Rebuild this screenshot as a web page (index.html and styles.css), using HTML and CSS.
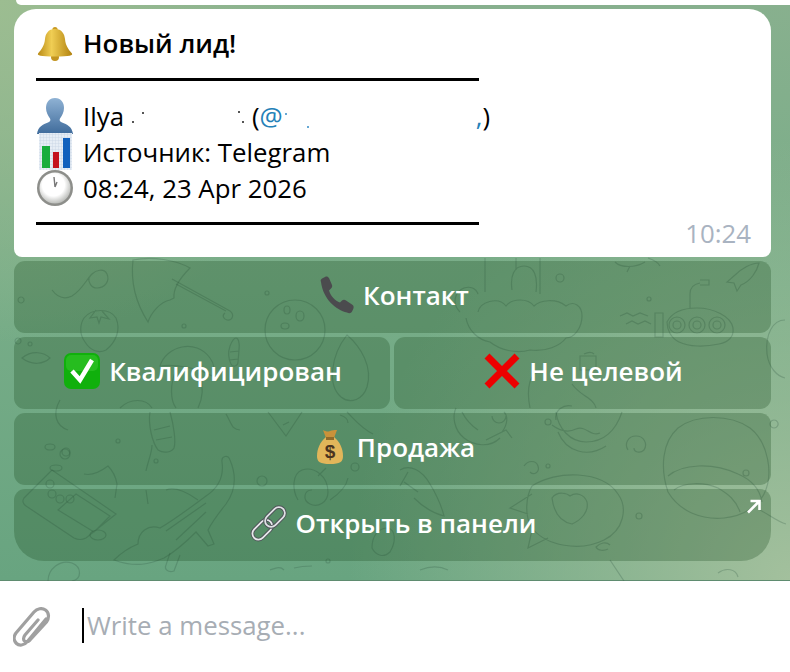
FILE: index.html
```html
<!DOCTYPE html>
<html lang="en">
  <head>
    <meta charset="UTF-8" />
    <title>Новый лид</title>
    <link rel="stylesheet" href="styles.css">
  </head>
  <body>
    <main class="chat">
      <svg class="doodles" width="790" height="581" viewBox="0 0 790 581" fill="none">
        <!-- umbrella -->
        <path d="M133 260c-3 26 6 48 15 62 3-9 12-20 22-22l4-2c-1-10 6-20 16-30-14-8-38-12-57-8z" />
        <path d="M172 279l58 32c5 4 2 10-3 9-4-1-5-5-2-7M176 284l50 27" />
        <path d="M52 290c6 8 12 10 20 6 10-6 14-16 20-22 4-4 12-6 15 0 3 7-2 14-10 14-6 0-9-6-8-11M21 297a3 3 0 1 0 .1 0" />
        <!-- tomato -->
        <path d="M84 318c8-10 26-10 32 0 5 12 0 24-10 32-8 4-16 0-21-8-6-8-5-18-1-24zM96 310l-6 8 7-1 2 6 2-6 8 2-7-8" />
        <!-- ball -->
        <circle cx="295" cy="330" r="30" />
        <ellipse cx="287" cy="310" rx="3" ry="4" /><ellipse cx="300" cy="316" rx="4" ry="5" /><ellipse cx="285" cy="326" rx="4" ry="3" />
        <circle cx="267" cy="293" r="2" /><circle cx="184" cy="326" r="2" />
        <!-- mushroom, rattle and leaves in the second row -->
        <path d="M160 366c6-20 36-28 50-8 6 8 4 14 2 18-14-8-36-12-52-10zM176 370c-6 14-6 30 0 38M200 374c4 14 2 26-2 34" />
        <path d="M230 346c2-5 4-8 6-8s4 4 3 12l-1 12c0 4-5 6-7 2-3-6-3-12-1-18zM230 352l9-1M230 360l8-1" />
        <path d="M347 335c14 12 26 32 20 52-4 12-16 18-26 10-14-12-10-42 6-62z" />
        <path d="M22 358c10-8 22-6 28 0-6 6-18 8-28 0zM18 338a3 3 0 1 0 .1 0M30 342a2 2 0 1 0 .1 0" />
        <path d="M120 408c10-10 26-10 32 0M60 400c-8 14-4 26 8 30" />
        <!-- cloud and castle -->
        <path d="M485 258v34M540 258v36M516 258v12M512 290c-2-14 2-24 12-24s14 10 12 26M460 312c-8-8-6-20 4-24 6-2 12 0 14 6M478 312c2-10 20-16 28-6 6-8 22-8 28 0 6-6 22-8 32 0 8-6 16 0 16 10 0 12-8 22-16 22-6 8-20 14-36 12-14 4-30 0-40-8-12-2-22-12-24-24" />
        <circle cx="560" cy="278" r="4" /><circle cx="649" cy="299" r="2" />
        <!-- submarine -->
        <path d="M667 322c4-8 14-14 30-14 16 0 34 8 36 20 1 8-4 14-14 16-14 3-30 3-40-2-8-4-12-12-12-20zM690 308v-14c0-6 4-10 10-11M700 280h9v5h-9M655 313h8v24h-8z" />
        <circle cx="677" cy="325" r="8" /><circle cx="697" cy="325" r="8" /><circle cx="717" cy="325" r="8" />
        <circle cx="677" cy="325" r="4" /><circle cx="697" cy="325" r="4" /><circle cx="717" cy="325" r="4" />
        <path d="M620 316l7-3 6 3 7-3 8 3M626 324l6-3 6 3 7-3 6 3" />
        <!-- fish top right -->
        <path d="M735 275c6-6 16-12 24-12 -2 8-8 18-18 22l-4 6-3-8-7-1z" />
        <path d="M615 262c6 6 20 6 30 0M630 266l-3 6M648 258c6 2 10 4 12 8" />
        <path d="M785 320c-12 0-20 14-18 34 2 14 10 22 18 24" />
        <!-- row 2 middle and lower middle -->
        <path d="M540 372c-10 0-14 16-10 36M572 384c8 12 22 14 24 24" />
        <path d="M456 408c-4 8-2 22 8 30 10 8 26 10 36 0" />
        <path d="M556 420c-2-10 8-16 16-14M558 432c8 20 30 26 48 14" />
        <path d="M580 356h16v14h-16zM584 354c4-2 8-2 10 0" />
        <!-- pear and cheese row 3 -->
        <path d="M150 412c-2 12 2 30 8 38 6 4 14 2 16-2 2-6 0-22-4-36M154 430l16-4M156 440l16-3" />
        <path d="M268 412l18 24 16-24M240 430c-8 0-8-6-14-16M283 425l6-3" />
        <path d="M347 412c8 8 14 16 26 22M340 415c6 2 8 4 8 8" />
        <circle cx="118" cy="441" r="2" /><circle cx="355" cy="467" r="4" /><circle cx="66" cy="452" r="4" /><circle cx="262" cy="481" r="5" />
        <!-- rocket -->
        <path d="M462 412c4 8 10 14 16 18M492 416a7 7 0 1 0 14 0M502 432c6-8 6-16 2-20M486 440l20-10 6 8" />
        <!-- planet -->
        <path d="M556 412c2 16 14 30 30 30 18 0 30-12 36-30M552 425c8 6 16 8 24 4 10-4 14 8 24 4" />
        <path d="M628 450c-4-6 0-14 8-14 8 0 12 8 8 14-4 4-10 2-10-2" />
        <circle cx="548" cy="422" r="3" /><circle cx="548" cy="466" r="2" />
        <path d="M524 466c4-6 12-6 14 0 2 6-4 10-8 6" />
        <!-- big ball on the right -->
        <path d="M668 492c-8-24-6-50 10-64 18-14 52-14 72 0 18 14 24 46 14 66-6 12-20 22-40 24-22 2-44-6-56-26zM668 476c14-12 44-14 70-2 14 6 22 16 24 28M674 490c10-8 30-8 44-2 10 6 18 12 22 24" />
        <circle cx="746" cy="473" r="3" />
        <!-- coins and wallet -->
        <path d="M24 498l24-24 4-4 64 44-30 24c-4 2-8 2-12 0l-48-32c-3-2-4-5-2-8zM58 510l18-16 34 22-16 16zM84 474c8 2 16-2 24-8 6 6 8 12 9 18l-2 14" />
        <circle cx="50" cy="484" r="4" /><circle cx="52" cy="494" r="4" /><circle cx="60" cy="499" r="4" /><circle cx="70" cy="499" r="4" />
        <ellipse cx="50" cy="447" rx="5" ry="3" /><ellipse cx="56" cy="468" rx="6" ry="3" /><circle cx="65" cy="454" r="5" />
        <ellipse cx="98" cy="535" rx="8" ry="5" />
        <path d="M152 445c0 8-4 16-6 26M146 490l2 14" />
        <!-- crocodile -->
        <path d="M114 560c6-6 14-12 24-16 0-12 10-20 22-16 14-8 30-20 46-32 12-8 18-20 16-34-1-6 6-8 8-2 6 14 6 30-4 44-8 10-14 18-18 26l6 14-6 2-12-14c-8 8-18 18-32 26-14 6-28 10-50 2zM166 531l40-28M176 540l30-28M198 500c-8-6-22-14-32-10" />
        <path d="M170 553l-4 12c-2 4 2 8 8 6l6-16" />
        <!-- snail -->
        <path d="M298 500c-6-10-6-26 4-30 12-4 26 6 26 22 0 10-10 16-18 12-8-4-6-14 2-14M330 500c6-4 16-12 18-22M318 476l8-8" />
        <circle cx="156" cy="461" r="2" />
        <!-- strawberry and carrot -->
        <path d="M400 470c10-6 22 0 30 14 6 10 12 24 14 32-8-2-20-8-30-18M404 482l14 10M408 472l-8 14" />
        <path d="M372 548c0-12 6-20 16-20 8 2 8 14 2 24-6 6-14 4-18-4z" />
        <!-- fish with a heart -->
        <path d="M532 486c24-16 70-16 86 8 10 14 6 36-14 46-24 12-58 6-72-12-8-12-6-32 0-42zM532 494l-22 14 18 6M532 530l-4 18 20-10M610 545c-4-4-10-2-14 2 2 4 8 4 12 2" />
        <path d="M552 498c6-8 16-4 18-2 6-4 14-2 17 6 2 10-6 18-15 22-10-2-18-10-20-26z" />
        <circle cx="639" cy="516" r="3" />
        <!-- bottom strip -->
        <path d="M48 581c0-12 12-22 24-18 10 4 10 16 0 18M294 568c8-2 12-2 18-2M420 570c10-4 20-4 28 0M610 560l14 21M718 573c8-6 18-4 20 4M270 570c6-2 10-4 14 0" />
        <circle cx="328" cy="561" r="2" />
        <path d="M760 510c8 4 18 12 26 14M774 420a4 4 0 1 0 .1 0" />
      </svg>

      <div class="prev-bubble"></div>

      <article class="bubble">
        <p class="row title">
          <svg class="emoji" viewBox="0 0 36 36">
            <defs>
              <linearGradient id="gold" x1="0" y1="0" x2="1" y2="0">
                <stop offset="0" stop-color="#b98a16" /><stop offset=".4" stop-color="#f0ce54" /><stop offset="1" stop-color="#b2820f" />
              </linearGradient>
            </defs>
            <circle cx="18" cy="31" r="4" fill="#c29420" />
            <circle cx="18" cy="3.500" r="2.600" fill="#c99a22" />
            <path d="M18 3c7 0 9.500 5 10 10 .5 6 3 10 7 14.500 1 2-2 3-17 3s-18-1-17-3C5 23 7.500 19 8 13c.5-5 3-10 10-10z" fill="url(#gold)" />
          </svg>
          <strong>Новый лид!</strong>
        </p>
        <hr class="rule rule-top" />

        <p class="row">
          <svg class="emoji" viewBox="0 0 36 36">
            <defs>
              <linearGradient id="blue" x1="0" y1="0" x2="0" y2="1">
                <stop offset="0" stop-color="#8fb2d4" /><stop offset="1" stop-color="#3f6b9b" />
              </linearGradient>
            </defs>
            <path d="M18 0c6 0 9 4.500 9 10 0 4-2 8-4 10.500-1 2 0 3 2 4 5 2 10 4 11 11.500H0c1-7.500 6-9.500 11-11.500 2-1 3-2 2-4C11 18 9 14 9 10c0-5.500 3-10 9-10z" fill="url(#blue)" />
          </svg>
          <span>Ilya</span>
          <span class="smudge smudge-name">
            <i class="speck dot1"></i><i class="speck dot2"></i><i class="speck dot3"></i><i class="speck dot4"></i>
          </span>
          <span class="open">(<b class="link">@</b></span>
          <span class="smudge smudge-nick">
            <i class="speck speck-blue dot5"></i><i class="speck speck-blue dot6"></i>
          </span>
          <span><b class="link">,</b>)</span>
        </p>
        <p class="row">
          <svg class="emoji" viewBox="0 0 36 36">
            <defs>
              <pattern id="grid" width="3" height="3" patternUnits="userSpaceOnUse">
                <rect width="3" height="3" fill="#e6edf5" /><path d="M0 0h3M0 0v3" stroke="#c2d0e2" stroke-width=".7" />
              </pattern>
            </defs>
            <rect x="2" y="-1" width="33" height="37" fill="url(#grid)" />
            <rect x="5" y="12" width="8" height="22" fill="#18ad3c" />
            <rect x="16" y="18" width="6" height="16" fill="#c4121e" />
            <rect x="26" y="4" width="7" height="30" fill="#1160bd" />
          </svg>
          <span>Источник: Telegram</span>
        </p>
        <p class="row">
          <svg class="emoji" viewBox="0 0 36 36">
            <defs>
              <radialGradient id="face" cx=".45" cy=".4" r=".65">
                <stop offset=".55" stop-color="#fff" /><stop offset="1" stop-color="#aeb0ac" />
              </radialGradient>
            </defs>
            <circle cx="18" cy="18" r="18" fill="#8d8e8a" />
            <circle cx="18" cy="18" r="15.500" fill="url(#face)" />
            <path d="M18 17l-1-10M18 17l2-5" stroke="#777" stroke-width="1.400" fill="none" />
          </svg>
          <span>08:24, 23 Apr 2026</span>
        </p>
        <hr class="rule rule-bottom" />
        <time class="time">10:24</time>
      </article>

      <nav class="keyboard">
        <button class="key wide">
          <svg class="emoji" viewBox="0 0 36 36">
            <path d="M3 5c-1-2 0-3 2-4l2-1c2-1 3 0 4 1l3 7c.5 1.500 0 2.500-1 3.500l-2 2c2 6 6 10 11 12l2-2c1-1 3-1 4 0l6 4c2 1 2 3 1 5l-1 2c-1 2-3 2-5 1C18 33 5 22 3 5z" fill="#4b4b4e" />
          </svg>
          <span>Контакт</span>
        </button>
        <button class="key">
          <svg class="emoji" viewBox="0 0 36 36">
            <rect width="36" height="36" rx="7" fill="#10b00c" />
            <rect x="2" y="2" width="32" height="16" rx="5" fill="#3cc932" opacity=".5" />
            <path d="M8 18l8 9L28 7" fill="none" stroke="#fff" stroke-width="4.500" />
          </svg>
          <span>Квалифицирован</span>
        </button>
        <button class="key">
          <svg class="emoji" viewBox="0 0 36 36">
            <path d="M3 3L33 33M33 3L3 33" stroke="#ed0000" stroke-width="7" fill="none" />
          </svg>
          <span>Не целевой</span>
        </button>
        <button class="key wide">
          <svg class="emoji" viewBox="0 0 36 36">
            <path d="M11 1c3 1.500 5 2 7 1s4-1 7-1l-3 8h-8z" fill="#c9923a" />
            <path d="M14 8h8c6 5 9 12 9 19 0 6-3 8-13 8S5 33 5 27c0-7 3-14 9-19z" fill="#e2b65a" />
            <path d="M14 8h8v3h-8z" fill="#8f6a2a" />
            <text class="dollar" x="18" y="29" text-anchor="middle">$</text>
          </svg>
          <span>Продажа</span>
        </button>
        <button class="key wide last">
          <svg class="emoji" viewBox="0 0 36 36">
            <g fill="none" transform="rotate(-45 18 18)">
              <rect x="-3" y="12" width="23" height="12" rx="6" stroke="#4e5258" stroke-width="3.600" />
              <rect x="-3" y="12" width="23" height="12" rx="6" stroke="#e6e8ea" stroke-width="1.800" />
              <rect x="15" y="12" width="23" height="12" rx="6" stroke="#4e5258" stroke-width="3.600" />
              <rect x="15" y="12" width="23" height="12" rx="6" stroke="#dfe2e4" stroke-width="1.800" />
            </g>
          </svg>
          <span>Открыть в панели</span>
          <svg class="corner" width="15" height="15" viewBox="0 0 15 15">
            <path d="M2 13.500L13 2.500M4.500 2h9v9" fill="none" stroke="#fff" stroke-width="2.600" />
          </svg>
        </button>
      </nav>
    </main>

    <footer class="composer">
      <svg class="clip" width="38" height="44" viewBox="0 0 38 44" fill="none">
        <path d="M33 12L14 35c-3 3.500-8 4-10.500 1.500S0 30 3 26L21 5c3-3.500 8-4.500 11.500-2s4 8 1 12L17 33c-2 2-4 2-5.500 1s-1-4 .5-6l13-15" stroke="#a0a0a0" stroke-width="3.200" stroke-linecap="round" />
      </svg>
      <div class="input">
        <span class="caret"></span>
        <span class="placeholder">Write a message...</span>
      </div>
    </footer>
  </body>
</html>
```

FILE: styles.css
```css
* {
  box-sizing: border-box;
  margin: 0;
  padding: 0;
}

body {
  width: 790px;
  height: 672px;
  overflow: hidden;
  background: #fff;
  font-family: "Open Sans", "Noto Sans", sans-serif;
  font-size: 25.8px;
  color: #000;
}

.chat {
  position: relative;
  height: 581px;
  padding: 0 19px 0 14px;
  background:
    radial-gradient(circle at 100% 100%, #a3c09d 0, rgba(163, 192, 157, 0) 45%),
    radial-gradient(circle at 0 0, #9cbd91 0, rgba(156, 189, 145, 0) 35%),
    linear-gradient(180deg, #88b08e 0, #78ad88 50%, #68a480 100%);
  border-bottom: 1px solid #5f8c70;
}

.doodles {
  position: absolute;
  top: 0;
  left: 0;
  stroke: rgba(45, 85, 65, 0.26);
  stroke-width: 1.2;
}

.prev-bubble {
  position: relative;
  height: 5px;
  margin: 0 -19px 4px 2px;
  background: #fff;
  border-radius: 0 0 0 8px;
}

.bubble {
  position: relative;
  display: flex;
  flex-direction: column;
  height: 248px;
  padding: 17px 20px 0 22px;
  background: #fff;
  border-radius: 22px 22px 8px 8px;
}

.row {
  display: flex;
  align-items: center;
  height: 36px;
  line-height: 36px;
  white-space: pre;
}

.row > span {
  margin-top: -1px;
}

.row > strong {
  margin-top: -2px;
}

.emoji {
  flex: none;
  width: 36px;
  height: 36px;
  overflow: visible;
}

.row .emoji {
  margin: 0 10px 0 1px;
}

.title strong {
  font-size: 26px;
  font-weight: 600;
}

.rule {
  width: 443px;
  height: 3px;
  background: #000;
  border: 0;
}

.rule-top {
  margin: 16px 0 17px;
}

.rule-bottom {
  margin-top: 16px;
}

.row > .smudge {
  position: relative;
  display: inline-block;
  height: 36px;
  margin-top: 0;
}

.row > .smudge-name {
  width: 112px;
  margin-left: 8px;
}

.smudge-nick {
  width: 193px;
}

.row > .open {
  margin-left: 8px;
}

.link {
  font-weight: 400;
  color: #2481b8;
}

.speck {
  position: absolute;
  width: 2px;
  height: 2px;
  background: #555;
}

.speck-blue {
  background: #66a8d4;
}

.dot1 { left: 0; top: 23px; }
.dot2 { left: 10px; top: 14px; }
.dot3 { left: 106px; top: 13px; }
.dot4 { left: 110px; top: 23px; }
.dot5 { left: 2px; top: 15px; }
.dot6 { left: 24px; top: 28px; }

.time {
  align-self: flex-end;
  margin-top: -7px;
  line-height: 30px;
  color: #a9b3c1;
}

.keyboard {
  position: relative;
  display: grid;
  grid-template-columns: 376px 377px;
  gap: 4px;
  margin-top: 4px;
}

.key {
  position: relative;
  display: flex;
  align-items: center;
  justify-content: center;
  gap: 9px;
  height: 72px;
  padding: 0 0 4px 2px;
  border: 0;
  border-radius: 11px;
  background: rgba(22, 72, 26, 0.27);
  font-family: inherit;
  font-size: 26px;
  font-weight: 600;
  color: #fff;
}

.wide {
  grid-column: 1 / 3;
}

.last {
  border-radius: 11px 11px 30px 30px;
}

.corner {
  position: absolute;
  top: 10px;
  right: 10px;
}

.dollar {
  font-family: "Liberation Sans", sans-serif;
  font-size: 19px;
  font-weight: 700;
  fill: #4a3420;
  stroke: none;
}

.composer {
  display: flex;
  align-items: flex-start;
  height: 91px;
  padding: 26px 0 0 13px;
}

.input {
  display: flex;
  align-items: center;
  height: 36px;
  margin-left: 31px;
}

.caret {
  width: 2px;
  height: 35px;
  background: #000;
}

.placeholder {
  margin-left: 3px;
  color: #a7adb4;
}
```
